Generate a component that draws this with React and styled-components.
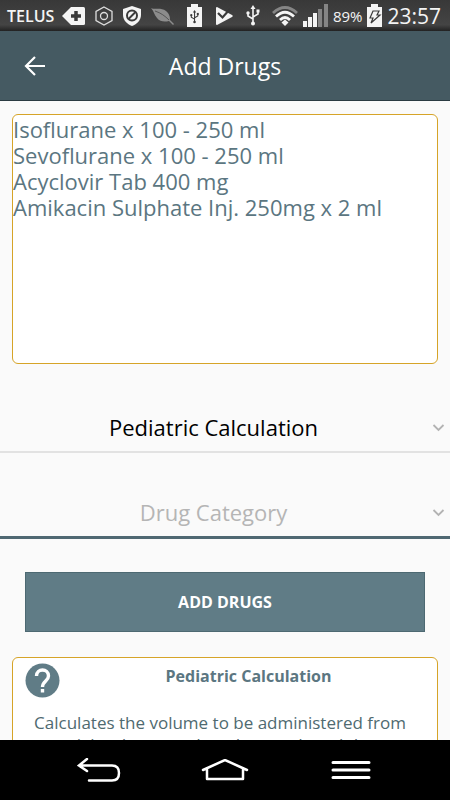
import React, { useState } from "react";
import styled, { createGlobalStyle } from "styled-components";

const GlobalStyle = createGlobalStyle`
  * {
    box-sizing: border-box;
  }
  body {
    margin: 0;
    background: #fafafa;
    font-family: "Open Sans", "Noto Sans", sans-serif;
  }
`;

const Screen = styled.div`
  height: 100vh;
  display: flex;
  flex-direction: column;
  overflow: hidden;
`;
const StatusBar = styled.div`
  flex: none;
  display: flex;
  align-items: center;
  justify-content: space-between;
  height: 31px;
  padding: 0 9px 0 7px;
  color: #f4f4f4;
  background: linear-gradient(#383838, #444 80%, #222);
`;
const StatusGroup = styled.div`
  display: flex;
  align-items: center;
  gap: ${({ $gap }) => $gap}px;
`;
const StatusText = styled.span`
  font-size: ${({ $size }) => $size}px;
  font-weight: ${({ $weight }) => $weight || 400};
`;
const Icon = styled.svg`
  display: block;
  flex: none;
`;
const Header = styled.header`
  flex: none;
  display: grid;
  grid-template-columns: 70px 1fr 70px;
  align-items: center;
  height: 70px;
  background: #455a62;
  border-bottom: 1px solid #2b3b42;
  color: #fff;
`;
const IconButton = styled.button`
  display: flex;
  align-items: center;
  justify-content: center;
  height: 100%;
  padding: 0;
  border: none;
  background: none;
  color: inherit;
  cursor: pointer;
`;
const Title = styled.h1`
  margin: 0;
  font-size: 23px;
  font-weight: 400;
  text-align: center;
`;
const Content = styled.main`
  flex: 1;
  min-height: 0;
  overflow: hidden;
  padding-top: 13px;
`;
const DrugList = styled.textarea`
  display: block;
  width: calc(100% - 24px);
  height: 250px;
  margin: 0 12px 36px;
  padding: 1px 0;
  border: 1px solid #d6a428;
  border-radius: 6px;
  outline: none;
  resize: none;
  background: #fff;
  color: #5b7681;
  font-family: inherit;
  font-size: 22px;
  line-height: 26px;
`;
const Picker = styled.div`
  display: grid;
  align-items: center;
  padding: 12px 0 9px;
  border-bottom: 2px solid #e2e2e2;
`;
const CategoryPicker = styled(Picker)`
  padding-top: 44px;
  border-bottom: 3px solid #4f6872;
`;
const Select = styled.select`
  grid-area: 1 / 1;
  appearance: none;
  width: 100%;
  padding: 0 23px 0 0;
  border: none;
  outline: none;
  background: none;
  color: ${({ $empty }) => ($empty ? "#b5b5b5" : "#000")};
  font-family: inherit;
  font-size: 22px;
  line-height: 30px;
  text-align: center;
  text-align-last: center;
`;
const Chevron = styled(Icon)`
  grid-area: 1 / 1;
  justify-self: end;
  margin-right: 5px;
  pointer-events: none;
`;
const SubmitButton = styled.button`
  display: block;
  width: calc(100% - 50px);
  height: 60px;
  margin: 33px 25px 25px;
  border: 1px solid #4d6972;
  background: #607c86;
  color: #fff;
  font-family: inherit;
  font-size: 16px;
  font-weight: 700;
  cursor: pointer;
`;
const InfoCard = styled.section`
  display: grid;
  grid-template-columns: 35px 1fr;
  margin: 0 12px;
  padding: 5px 12px 24px;
  border: 1px solid #d6a428;
  border-radius: 6px;
  background: #fff;
  color: #5b7681;
`;
const InfoTitle = styled.h2`
  margin: 0 0 0 12px;
  font-size: 16px;
  font-weight: 700;
  line-height: 26px;
  text-align: center;
`;
const InfoText = styled.p`
  grid-column: 1 / -1;
  margin: 14px 16px 0 6px;
  color: #4f6a70;
  font-size: 17px;
  line-height: 22px;
  text-align: center;
`;
const NavBar = styled.nav`
  flex: none;
  display: grid;
  grid-template-columns: repeat(3, 126px);
  justify-content: center;
  height: 60px;
  background: #000;
  color: #fff;
`;

const DRUGS = [
  "Isoflurane x 100 - 250 ml",
  "Sevoflurane x 100 - 250 ml",
  "Acyclovir Tab 400 mg",
  "Amikacin Sulphate Inj. 250mg x 2 ml",
].join("\n");

const BatteryShape = () => <path d="M4 3V0h7v3h4v20H0V3z" fill="#f4f4f4" />;

const UsbMark = () => (
  <>
    <path
      d="M7 3v15M7 14L2 11V8M7 12l5-3V6"
      fill="none"
      stroke="currentColor"
      strokeWidth="1.6"
    />
    <path d="M7 0l2.5 4h-5z" fill="currentColor" />
    <circle cx="7" cy="18.5" r="2" fill="currentColor" />
    <circle cx="2" cy="8" r="1.7" fill="currentColor" />
    <path d="M10.5 4.5h3v3h-3z" fill="currentColor" />
  </>
);

const Status = () => (
  <StatusBar>
    <StatusGroup $gap={13}>
      <StatusGroup $gap={10}>
        <StatusGroup $gap={8}>
          <StatusText $size={16} $weight={600}>
            TELUS
          </StatusText>
          <Icon width="23" height="18" viewBox="0 0 23 18">
            <path
              d="M0 9L9 0h12.5Q23 0 23 1.5v15Q23 18 21.5 18H9z"
              fill="#f4f4f4"
            />
            <path d="M14 4v10M9 9h10" stroke="#3a3a3a" strokeWidth="3.5" />
          </Icon>
        </StatusGroup>
        <Icon width="18" height="20" viewBox="0 0 18 20">
          <g fill="none" stroke="#ddd" strokeWidth="1.3">
            <path d="M9 1l8 4.5v9L9 19l-8-4.5v-9z" />
            <circle cx="9" cy="10" r="3.5" />
          </g>
        </Icon>
        <Icon width="18" height="20" viewBox="0 0 18 20">
          <path d="M9 0l9 3v6c0 5-4 9-9 11-5-2-9-6-9-11V3z" fill="#f4f4f4" />
          <g fill="none" stroke="#3a3a3a" strokeWidth="2">
            <circle cx="9" cy="9.5" r="5" />
            <path d="M5.5 13l7-7" />
          </g>
        </Icon>
        <Icon width="23" height="18" viewBox="0 0 23 18">
          <path
            d="M0 1c4 2 10-1 15 3 4 3 4 7 4 9l4 4-1 1-4-4c-4 1-9 1-12-3C3 8 3 4 0 1z"
            fill="#8c8c8c"
          />
          <path d="M4 4c6 2 10 5 14 9" fill="none" stroke="#555" />
        </Icon>
      </StatusGroup>
      <Icon width="15" height="23" viewBox="0 0 15 23">
        <BatteryShape />
        <g transform="translate(3 6) scale(.65)" color="#3a3a3a">
          <UsbMark />
        </g>
      </Icon>
      <Icon width="18" height="18" viewBox="0 0 18 18">
        <path d="M2 0l15 8q1.5 1 0 2L2 18q-1 0-1-1V1q0-1 1-1z" fill="#f4f4f4" />
        <path
          d="M3 6l4.5 4.5L15 2"
          fill="none"
          stroke="#3a3a3a"
          strokeWidth="2.2"
        />
      </Icon>
      <Icon width="14" height="22" viewBox="0 0 14 22">
        <UsbMark />
      </Icon>
    </StatusGroup>
    <StatusGroup $gap={5}>
      <Icon width="26" height="20" viewBox="0 0 26 20">
        <g fill="none" strokeWidth="2.8">
          <path d="M1 7Q13-4 25 7" stroke="#858585" />
          <path d="M4 10.5Q13 2 22 10.5M8 14Q13 9 18 14" stroke="#f4f4f4" />
        </g>
        <path d="M13 13.5l3.5 3-3.5 3.5-3.5-3.5z" fill="#f4f4f4" />
      </Icon>
      <Icon width="25" height="23" viewBox="0 0 25 23">
        <path d="M0 17h4v6H0zM5 13h4v10H5zM10 9h4v14h-4z" fill="#f4f4f4" />
        <path d="M15 5h4v18h-4zM21 0h4v23h-4z" fill="#858585" />
      </Icon>
      <StatusText $size={15}>89%</StatusText>
      <Icon width="15" height="23" viewBox="0 0 15 23">
        <BatteryShape />
        <path
          d="M6 7h6l-2 4h3l-9 8 2-5H3z"
          fill="none"
          stroke="#3a3a3a"
          strokeWidth="1.2"
        />
      </Icon>
      <StatusText $size={21}>23:57</StatusText>
    </StatusGroup>
  </StatusBar>
);

const ChevronIcon = () => (
  <Chevron width="13" height="9" viewBox="0 0 13 9" aria-hidden="true">
    <path d="M1.5 2l5 5 5-5" fill="none" stroke="#b3b3b3" strokeWidth="1.8" />
  </Chevron>
);

const App = () => {
  const [drugs, setDrugs] = useState(DRUGS);
  const [mode, setMode] = useState("pediatric");
  const [category, setCategory] = useState("");

  return (
    <Screen>
      <GlobalStyle />
      <Status />
      <Header>
        <IconButton aria-label="Back">
          <Icon width="22" height="20" viewBox="0 0 22 20">
            <path
              d="M21 10H2M11 1l-9 9 9 9"
              fill="none"
              stroke="currentColor"
              strokeWidth="2.2"
            />
          </Icon>
        </IconButton>
        <Title>Add Drugs</Title>
      </Header>
      <Content>
        <DrugList
          aria-label="Drugs"
          spellCheck={false}
          value={drugs}
          onChange={(e) => setDrugs(e.target.value)}
        />
        <Picker>
          <Select
            aria-label="Calculation"
            value={mode}
            onChange={(e) => setMode(e.target.value)}
          >
            <option value="pediatric">Pediatric Calculation</option>
          </Select>
          <ChevronIcon />
        </Picker>
        <CategoryPicker>
          <Select
            aria-label="Category"
            $empty={!category}
            value={category}
            onChange={(e) => setCategory(e.target.value)}
          >
            <option value="">Drug Category</option>
          </Select>
          <ChevronIcon />
        </CategoryPicker>
        <SubmitButton type="button">ADD DRUGS</SubmitButton>
        <InfoCard>
          <Icon width="35" height="35" viewBox="0 0 35 35" aria-hidden="true">
            <circle cx="17.5" cy="17.5" r="17" fill="#607c86" />
            <path
              d="M11.5 13c0-8 12-8 12 0 0 5-6 5-6 11"
              fill="none"
              stroke="#fff"
              strokeWidth="3.4"
            />
            <path d="M15.8 26h3.4v3.4h-3.4z" fill="#fff" />
          </Icon>
          <InfoTitle>Pediatric Calculation</InfoTitle>
          <InfoText>
            Calculates the volume to be administered from weight, dose, product
            dose and total dose
          </InfoText>
        </InfoCard>
      </Content>
      <NavBar>
        <IconButton aria-label="Back">
          <Icon width="44" height="24" viewBox="0 0 44 24">
            <path
              d="M10 1L2 7.5 10 13M2 7.5h33q7 0 7 7.5t-7 7.5H12"
              fill="none"
              stroke="currentColor"
              strokeWidth="2.5"
              strokeLinecap="round"
            />
          </Icon>
        </IconButton>
        <IconButton aria-label="Home">
          <Icon width="48" height="22" viewBox="0 0 48 22">
            <path
              d="M2 11L24 1l22 10M6 9.5V20h36V9.5"
              fill="none"
              stroke="currentColor"
              strokeWidth="2.5"
              strokeLinecap="round"
              strokeLinejoin="round"
            />
          </Icon>
        </IconButton>
        <IconButton aria-label="Menu">
          <Icon width="40" height="20" viewBox="0 0 40 20">
            <path
              d="M2 2.5h36M2 10h36M2 17.5h36"
              stroke="currentColor"
              strokeWidth="3"
              strokeLinecap="round"
            />
          </Icon>
        </IconButton>
      </NavBar>
    </Screen>
  );
};

export default App;
